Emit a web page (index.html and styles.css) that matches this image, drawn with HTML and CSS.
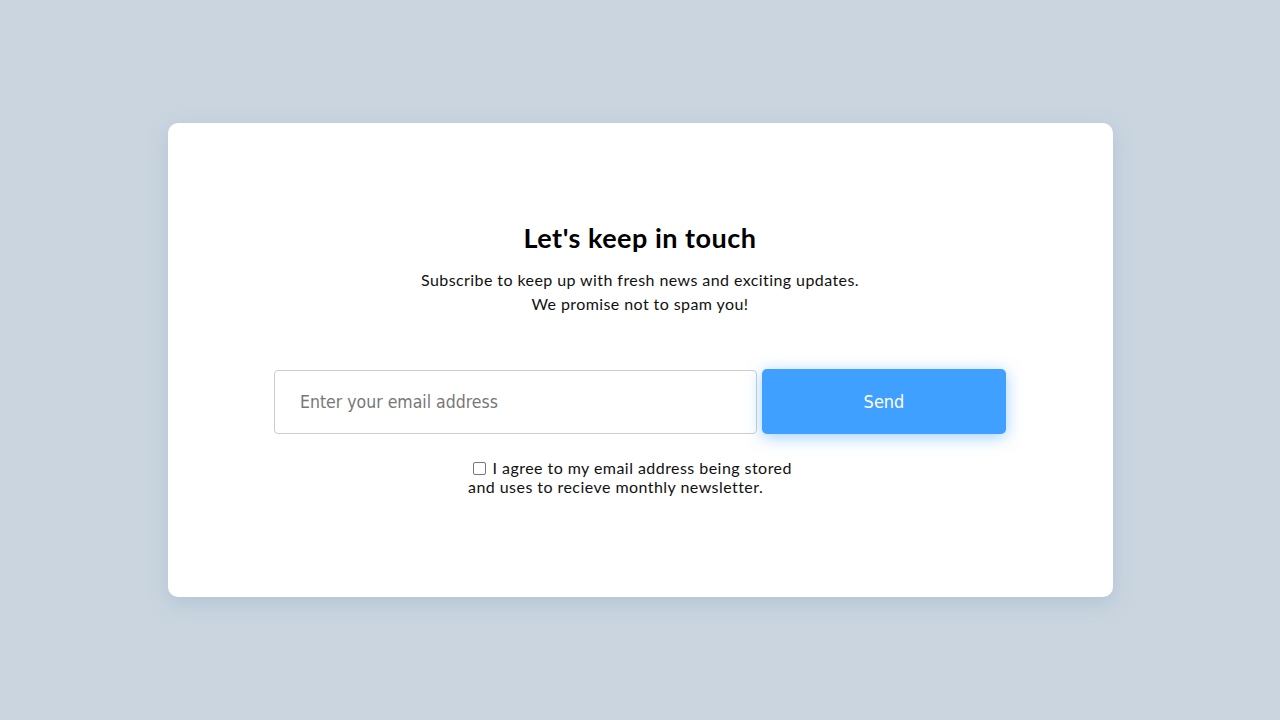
FILE: index.html
```html
<!DOCTYPE html>
<html>
<head>
    <link rel="stylesheet" href="styles.css">
</head>
<body>
    <div class="card">
        <h1>Let's keep in touch</h1>
        <p class="intro">Subscribe to keep up with fresh news and exciting updates.<br>We promise not to spam you!</p>
        <form class="signup">
            <input type="email" class="email" placeholder="Enter your email address">
            <button type="button" class="send">Send</button>
        </form>
        <label class="agree"><input type="checkbox"> I agree to my email address being stored and uses to recieve monthly newsletter.</label>
    </div>
</body>
</html>
```

FILE: styles.css
```css
body {
    font-family: "Lato", "Noto Sans", sans-serif;
    background-color: #cad5df;
    margin: 0;
    height: 720px;
    display: flex;
    align-items: center;
    justify-content: center;
}
.card {
    width: 945px;
    height: 474px;
    box-sizing: border-box;
    background-color: white;
    border-radius: 10px;
    box-shadow: 0 6px 20px rgba(150, 175, 205, 0.45);
    display: flex;
    flex-direction: column;
    align-items: center;
    justify-content: center;
}
h1 {
    font-size: 27px;
    line-height: 32px;
    font-weight: 700;
    letter-spacing: 0.5px;
    margin: 0 0 14px;
    color: #000;
}
.intro {
    font-size: 16px;
    line-height: 24px;
    letter-spacing: 0.42px;
    text-align: center;
    margin: 0 0 53px;
    color: #111;
}
.signup {
    display: flex;
    gap: 5px;
    margin: 0 0 24px;
    align-items: flex-end;
}
.email {
    width: 483px;
    height: 64px;
    box-sizing: border-box;
    border: 1px solid #cccccc;
    border-radius: 4px;
    padding: 0 25px;
    font-family: "DejaVu Sans Condensed", "DejaVu Sans", sans-serif;
    font-size: 17.5px;
    outline: none;
}
.email::placeholder {
    color: #777;
}
.send {
    width: 244px;
    height: 65px;
    padding-top: 2px;
    border: none;
    border-radius: 5px;
    background-color: #40a0ff;
    color: white;
    font-family: "DejaVu Sans Condensed", "DejaVu Sans", sans-serif;
    font-size: 18px;
    box-shadow: 0 3px 16px rgba(64, 160, 255, 0.5);
}
.agree {
    width: 344px;
    font-size: 16px;
    line-height: 19px;
    letter-spacing: 0.45px;
    color: #111;
    margin-bottom: 3px;
}
.agree input {
    appearance: none;
    width: 13px;
    height: 13px;
    box-sizing: border-box;
    border: 1.5px solid #777;
    border-radius: 2px;
    background: white;
    margin: 0 2px 0 5px;
    vertical-align: -1px;
}
```
